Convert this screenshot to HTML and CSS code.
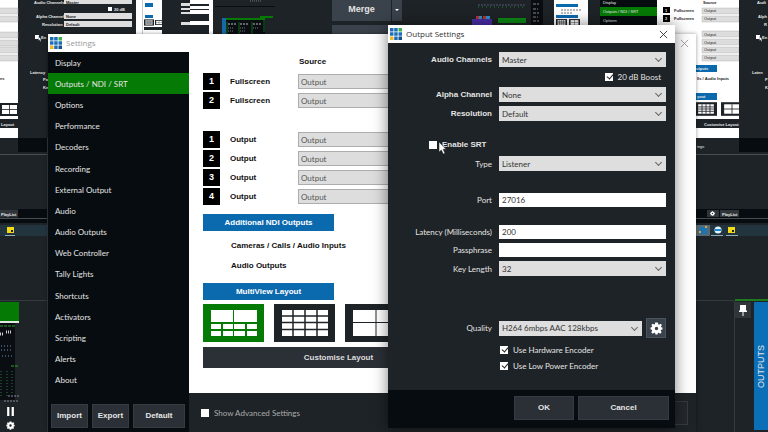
FILE: index.html
```html
<!DOCTYPE html>
<html lang="en">
<head>
    <meta charset="UTF-8">
    <meta name="viewport" content="width=device-width, initial-scale=1.0">
    <title>Output Settings</title>
    <link rel="stylesheet" href="styles.css">
</head>
<body>
    <!-- shared shapes -->
    <svg class="defs" aria-hidden="true">
        <symbol id="logo" viewBox="0 0 12 12">
            <path fill="#1c6fb5" d="M0 0h3.500v3.500H0zM4.200 0h3.500v3.500H4.200zM0 4.200h3.500v3.500H0zM4.200 4.200h3.500v3.500H4.200zM4.200 8.500h3.500V12H4.200zM8.500 4.200H12v3.500H8.500z"/>
            <path fill="#3fae49" d="M8.500 0H12v3.500H8.500z"/>
            <path fill="#174f8c" d="M8.500 8.500H12V12H8.500z"/>
            <path fill="#e9b82c" d="M0 8.500h3.500V12H0z"/>
        </symbol>
        <symbol id="gear" viewBox="0 0 24 24">
            <path fill="#fff" fill-rule="evenodd" d="M9.500 1h5l.7 3.300 1.500.6L19.500 3 22 5.600l-1.800 2.800.6 1.400L23 10v4l-2.500.5-.7 1.600 1.700 2.700-2.700 2.700-2.700-1.700-1.600.7-.5 2.500h-4l-.7-2.500-1.600-.7L5 21.500 2.300 18.800 4 16.100l-.7-1.600L1 14v-4l2.500-.6.6-1.500L2.500 5.400 5 3l2.500 1.600L9 4zM12 8.800a3.200 3.200 0 1 0 0 6.400 3.200 3.200 0 0 0 0-6.400z"/>
        </symbol>
        <symbol id="close" viewBox="0 0 10 10">
            <path d="M1 1l8 8M9 1l-8 8" fill="none" stroke="currentColor"/>
        </symbol>
        <symbol id="cursor" viewBox="0 0 9 14">
            <path d="M1 1v10l2.300-2 2 4 1.700-.8-1.900-3.900H8z" fill="#fff" stroke="#222" stroke-width=".5"/>
        </symbol>
        <symbol id="minitiles" viewBox="0 0 21 13">
            <path fill="#1e2327" d="M0 0h21v13H0z"/>
            <path fill="#fff" d="M3 2h15v9H3z"/>
            <path stroke="#1e2327" stroke-width=".8" d="M3 4.500h15M3 6.500h15M3 8.700h15M6.700 2v9M10.500 2v9M14.300 2v9"/>
        </symbol>
        <symbol id="mini4" viewBox="0 0 21 13">
            <path fill="#1e2327" d="M0 0h21v13H0z"/>
            <path fill="#fff" d="M3 2h15v9H3z"/>
            <path stroke="#1e2327" stroke-width=".8" d="M3 6.500h15M10.500 2v9"/>
        </symbol>
    </svg>

    <div class="desktop">
        <!-- preview and program monitors -->
        <svg class="monitors" viewBox="0 0 768 432" preserveAspectRatio="xMinYMin slice" aria-hidden="true">
            <!-- preview -->
            <path fill="#fff" d="M0 0h18v138H0z"/>
            <path fill="#ddd" stroke="#aaa" stroke-width=".4" d="M-1 8h19v6H-1zM-1 16h19v6H-1zM-1 32h19v6H-1zM-1 40h19v6H-1zM-1 47h19v6H-1zM-1 55h19v6H-1z"/>
            <text class="dark" x="0" y="80">es</text>
            <use href="#mini4" x="-1" y="103" width="21" height="13"/>
            <path fill="#1e2327" d="M0 119h18v9H0z"/>
            <text x="1" y="126">Layout</text>
            <path fill="#070c10" d="M18 138h30v14H18z"/>
            <path fill="#dedede" d="M64 0h68v4H64zM64 13h68v6H64zM64 21h68v6H64z"/>
            <path fill="#fff" d="M108 7h4v4h-4zM35 35h4v4h-4z"/>
            <text x="34" y="4">Audio Channels</text>
            <text x="114" y="11">20 dB</text>
            <text x="36" y="18">Alpha Channel</text>
            <text x="42" y="26">Resolution</text>
            <text class="dark" x="66" y="4">Master</text>
            <text class="dark" x="66" y="18">None</text>
            <text class="dark" x="66" y="26">Default</text>
            <text x="41" y="39">En</text>
            <use href="#cursor" x="38" y="36" width="4" height="6"/>
            <text x="30" y="74">Latency</text>
            <text x="43" y="81">Pa</text>
            <text x="43" y="89">Ke</text>
            <path fill="#fff" d="M136 0h26v34h-26zM190 0h23v34h-23z"/>
            <path fill="#ccc" d="M142 0h1v34h-1z"/>
            <path fill="#0b69ae" d="M145 3h8v4h-8zM145 15h8v3h-8z"/>
            <use href="#minitiles" x="144" y="19" width="10" height="7"/>
            <use href="#mini4" x="155" y="19" width="8" height="7"/>
            <path fill="#1e2327" d="M144 27h18v3h-18z"/>
            <path fill="#dedede" d="M181 3h9v3h-9zM181 8h9v2h-9zM181 12h9v2h-9zM181 22h9v3h-9z"/>
            <path fill="#1e2327" d="M190 4h19v2h-19zM190 9h19v1h-19zM190 14h19v7h-19zM190 25h19v9h-19z"/>
            <path fill="#0a0d12" d="M215 6h60v1h-60zM225 20h40v14h-40z"/>
            <path fill="#057a05" d="M224 18h41v2h-41zM260 16h13v2h-13z"/>
            <path fill="#1769a5" d="M222 18h4v16h-4z"/>
            <path stroke="#0b6b18" d="M227 22v12M239 22v12M252 22v12M264 20v12"/>
            <path stroke="#bbb" stroke-dasharray="2 1" d="M228 24h8M240 24h8M253 24h8"/>
            <path stroke="#777" stroke-dasharray="1 1" d="M228 28h6M240 28h6M253 28h6M228 31h6M240 31h6M250 1h12"/>

            <!-- program -->
            <path stroke="#557" stroke-dasharray="2 1" d="M478 5h48"/>
            <path stroke="#1a8a22" stroke-dasharray="1 3" d="M478 7h48"/>
            <path fill="#4b2ea8" d="M472 19h20v7h-20z"/>
            <path fill="#b33" d="M476 16h3v3h-3zM483 16h3v3h-3z"/>
            <path fill="#2f93c7" d="M479 16h3v3h-3zM486 16h4v3h-4z"/>
            <path fill="#0a8a14" d="M498 18h28v5h-28z"/>
            <path fill="#0a0d12" d="M531 0h12v25h-12z"/>
            <path stroke="#bbb" stroke-width=".7" stroke-dasharray="3 1" d="M533 4h6M533 9h5M533 13h6M533 17h5M533 21h6"/>
            <path fill="#fff" d="M554 0h34v25h-34z"/>
            <path fill="#0b69ae" d="M556 4h22v3h-22zM556 15h22v3h-22z"/>
            <path stroke="#777" stroke-dasharray="2 1" d="M561 10h20M561 13h12"/>
            <use href="#minitiles" x="556" y="19" width="11" height="7"/>
            <use href="#mini4" x="569" y="19" width="11" height="7"/>
            <path fill="#070c10" d="M600 0h57v25h-57z"/>
            <path fill="#057a05" d="M600 7h57v9h-57z"/>
            <text class="thin" x="603" y="4">Display</text>
            <text class="thin" x="603" y="13">Outputs / NDI / SRT</text>
            <text class="thin" x="603" y="22">Options</text>
            <path fill="#fff" d="M657 0h82v138h-82z"/>
            <path fill="#000" d="M663 7h7v6h-7zM663 15h7v7h-7z"/>
            <text x="665" y="12">1</text>
            <text x="665" y="20">2</text>
            <text class="dark" x="674" y="12">Fullscreen</text>
            <text class="dark" x="674" y="20">Fullscreen</text>
            <text class="dark" x="703" y="4">Source</text>
            <path fill="#ddd" stroke="#aaa" stroke-width=".4" d="M702 8h37v6h-37zM702 16h37v6h-37zM702 31h37v6h-37zM702 39h37v6h-37zM702 47h37v6h-37zM702 55h37v6h-37z"/>
            <text class="dark thin" x="704" y="12">Output</text>
            <text class="dark thin" x="704" y="20">Output</text>
            <text class="dark thin" x="704" y="36">Output</text>
            <text class="dark thin" x="704" y="44">Output</text>
            <text class="dark thin" x="704" y="51">Output</text>
            <text class="dark thin" x="704" y="59">Output</text>
            <path fill="#0b69ae" d="M663 65h54v7h-54zM663 93h54v7h-54z"/>
            <text x="696" y="70">utputs</text>
            <text class="dark" x="697" y="80">lls / Audio Inputs</text>
            <text x="697" y="98">yout</text>
            <use href="#minitiles" x="695" y="102" width="22" height="14"/>
            <use href="#mini4" x="721" y="102" width="22" height="14"/>
            <path fill="#1e2327" d="M663 119h76v9h-76zM739 0h29v138h-29z"/>
            <text x="704" y="126">Customise Layout</text>
            <text x="757" y="4">Audi</text>
            <text x="758" y="18">Alph</text>
            <text x="764" y="26">R</text>
            <path fill="#fff" d="M756 35h4v4h-4z"/>
            <text x="762" y="39">En</text>
            <use href="#cursor" x="759" y="36" width="4" height="6"/>
            <text x="752" y="74">Laten</text>
            <text x="765" y="81">P</text>
            <text x="765" y="89">K</text>
            <path fill="#070c10" d="M739 138h29v14h-29z"/>
            <text class="thin" x="697" y="148">ings</text>

            <!-- playlist strip and taskbar under both monitors -->
            <path fill="#070c10" d="M18 209h30v9H18zM18 219h30v4H18zM696 209h72v14h-72zM0 219h20v4H0z"/>
            <path fill="#30353a" d="M0 210h18v7H0zM720 210h19v7h-19zM707 210h12v7h-12z"/>
            <path stroke="#484d51" d="M0 154.500h48M696 154.500h72M0 218.500h48M696 218.500h72"/>
            <text x="1" y="216">PlayList</text>
            <text x="722" y="216">PlayList</text>
            <use href="#gear" x="710" y="211" width="5" height="5"/>
            <path fill="#22353f" d="M0 225h48v11H0zM696 225h72v11h-72z"/>
            <path fill="#f3d916" d="M7 227h7v6H7zM728 227h7v6h-7z"/>
            <path fill="#222" d="M11 230h2v2h-2zM732 230h2v2h-2z"/>
            <path fill="#566a75" d="M696 225h14v11h-14z"/>
            <path fill="#1b73b1" d="M700 227h7v7h-7z"/>
            <path fill="#e0a23c" d="M699 231h2v2h-2zM705 226h2v2h-2z"/>
            <circle cx="718" cy="230" r="3.500" fill="#dff1ff"/>
            <path fill="#168bd8" d="M715 229h6v2h-6z"/>
            <path stroke="#91a9b5" d="M5 235.500h10M711 235.500h12M726 235.500h12"/>

            <!-- input thumbnails -->
            <path stroke="#353a3f" d="M0 300.500h47M696 300.500h38M734.500 301v131M47.500 138v294"/>
            <path stroke="#1d7a1d" stroke-width="2" d="M735 300h33"/>
            <path fill="#057a05" d="M0 302h19v19H0z"/>
            <path fill="#dfe9df" d="M0 321h19v2H0z"/>
            <path fill="#0a0d12" d="M0 323h15v77H0z"/>
            <path stroke="#2aa52a" stroke-dasharray="3 1" d="M0 326h15M11 366h8"/>
            <path stroke="#ccc" stroke-width="3" stroke-dasharray="1 1" d="M0 334h3M6 332h6"/>
            <path stroke="#3b5068" stroke-width="2" stroke-dasharray="1 2" d="M1 346h12M1 350h12M2 356h12"/>
            <path stroke="#2a7a35" stroke-dasharray="1 2" d="M7 371v26M12 371v24M1 371v26"/>
            <path stroke="#889" stroke-dasharray="2 1" d="M4 401h15M8 396h11"/>
        </svg>

        <div class="mixer">
            <div class="transitions">
                <button type="button" class="merge">Merge</button>
                <button type="button" class="drop" aria-label="Choose transition"></button>
                <button type="button" class="next" aria-label="Next transition"></button>
            </div>
            <div class="input-bar">
                <div class="input-tools">
                    <button type="button" aria-label="Pause">
                        <svg viewBox="0 0 8 8"><path fill="#fff" d="M1 0h2v8H1zM5 0h2v8H5z"/></svg>
                    </button>
                    <button type="button" aria-label="Input settings"><svg><use href="#gear"/></svg></button>
                </div>
                <div class="output-tools">
                    <button type="button" class="pin" aria-label="Pin">
                        <svg viewBox="0 0 8 11"><path fill="#fff" d="M1 0h6v5l1 1v1H4.500v4h-1V7H0V6l1-1z"/></svg>
                    </button>
                    <button type="button" class="outputs">OUTPUTS</button>
                </div>
            </div>
        </div>

        <section class="window settings">
            <header class="titlebar inactive">
                <svg class="logo"><use href="#logo"/></svg>
                <h2>Settings</h2>
                <button type="button" class="close" aria-label="Close settings"><svg><use href="#close"/></svg></button>
            </header>
            <div class="settings-main">
                <div class="sidebar">
                    <nav>
                        <a href="#">Display</a>
                        <a href="#" class="active">Outputs / NDI / SRT</a>
                        <a href="#">Options</a>
                        <a href="#">Performance</a>
                        <a href="#">Decoders</a>
                        <a href="#">Recording</a>
                        <a href="#">External Output</a>
                        <a href="#">Audio</a>
                        <a href="#">Audio Outputs</a>
                        <a href="#">Web Controller</a>
                        <a href="#">Tally Lights</a>
                        <a href="#">Shortcuts</a>
                        <a href="#">Activators</a>
                        <a href="#">Scripting</a>
                        <a href="#">Alerts</a>
                        <a href="#">About</a>
                    </nav>
                    <div class="sidebar-buttons">
                        <button type="button" class="btn">Import</button>
                        <button type="button" class="btn">Export</button>
                        <button type="button" class="btn wide">Default</button>
                    </div>
                </div>
                <div class="content">
                    <div class="page">
                        <h3>Source</h3>
                        <div class="sources">
                            <div class="source"><b>1</b><label for="full1">Fullscreen</label><select id="full1"><option>Output</option></select></div>
                            <div class="source"><b>2</b><label for="full2">Fullscreen</label><select id="full2"><option>Output</option></select></div>
                        </div>
                        <div class="sources">
                            <div class="source"><b>1</b><label for="out1">Output</label><select id="out1"><option>Output</option></select></div>
                            <div class="source"><b>2</b><label for="out2">Output</label><select id="out2"><option>Output</option></select></div>
                            <div class="source"><b>3</b><label for="out3">Output</label><select id="out3"><option>Output</option></select></div>
                            <div class="source"><b>4</b><label for="out4">Output</label><select id="out4"><option>Output</option></select></div>
                        </div>
                        <button type="button" class="blue">Additional NDI Outputs</button>
                        <ul>
                            <li>Cameras / Calls / Audio Inputs</li>
                            <li>Audio Outputs</li>
                        </ul>
                        <button type="button" class="blue">MultiView Layout</button>
                        <div class="layouts">
                            <button type="button" class="selected" aria-label="Two large, eight small">
                                <svg viewBox="0 0 46 26"><path fill="#fff" d="M0 0h22v12H0zM23 0h23v12H23zM0 14h10v5H0zM12 14h10v5H12zM23 14h11v5H23zM36 14h10v5H36zM0 21h10v5H0zM12 21h10v5H12zM23 21h11v5H23zM36 21h10v5H36z"/></svg>
                            </button>
                            <button type="button" aria-label="Sixteen">
                                <svg viewBox="0 0 46 26"><path fill="#fff" d="M0 0h46v26H0z"/><path stroke="#1e2327" stroke-width="1.500" d="M0 6h46M0 12.500h46M0 19.500h46M11 0v26M23 0v26M35 0v26"/></svg>
                            </button>
                            <button type="button" aria-label="Four">
                                <svg viewBox="0 0 46 26"><path fill="#fff" d="M0 0h46v26H0z"/><path stroke="#1e2327" d="M0 12.500h46M23 0v26"/></svg>
                            </button>
                        </div>
                        <button type="button" class="customise">Customise Layout</button>
                    </div>
                    <footer class="settings-footer">
                        <label><input type="checkbox"> Show Advanced Settings</label>
                        <button type="button" class="btn" aria-label="Save settings"></button>
                    </footer>
                </div>
            </div>
        </section>

        <section class="window dialog" role="dialog" aria-label="Output Settings">
            <header class="titlebar">
                <svg class="logo"><use href="#logo"/></svg>
                <h2>Output Settings</h2>
                <button type="button" class="close" aria-label="Close"><svg><use href="#close"/></svg></button>
            </header>
            <form class="output-form">
                <div class="group audio">
                    <div class="field strong">
                        <label for="audio">Audio Channels</label>
                        <span class="select"><select id="audio"><option>Master</option></select></span>
                    </div>
                    <label class="check boost"><input type="checkbox" checked> 20 dB Boost</label>
                </div>
                <div class="group">
                    <div class="field strong">
                        <label for="alpha">Alpha Channel</label>
                        <span class="select"><select id="alpha"><option>None</option></select></span>
                    </div>
                    <div class="field strong">
                        <label for="resolution">Resolution</label>
                        <span class="select"><select id="resolution"><option>Default</option></select></span>
                    </div>
                </div>
                <div class="group srt">
                    <label class="check enable"><input type="checkbox"> Enable SRT
                        <svg class="pointer"><use href="#cursor"/></svg>
                    </label>
                    <div class="field">
                        <label for="type">Type</label>
                        <span class="select"><select id="type"><option>Listener</option></select></span>
                    </div>
                </div>
                <div class="group">
                    <div class="field">
                        <label for="port">Port</label>
                        <input type="text" id="port" value="27016">
                    </div>
                </div>
                <div class="group">
                    <div class="field">
                        <label for="latency">Latency (Milliseconds)</label>
                        <input type="text" id="latency" value="200">
                    </div>
                    <div class="field">
                        <label for="passphrase">Passphrase</label>
                        <input type="text" id="passphrase">
                    </div>
                    <div class="field">
                        <label for="key">Key Length</label>
                        <span class="select"><select id="key"><option>32</option></select></span>
                    </div>
                </div>
                <div class="group encoder">
                    <div class="field">
                        <label for="quality">Quality</label>
                        <div class="quality">
                            <span class="select"><select id="quality"><option>H264 6mbps AAC 128kbps</option></select></span>
                            <button type="button" class="gear" aria-label="Quality settings"><svg><use href="#gear"/></svg></button>
                        </div>
                    </div>
                    <div class="checks">
                        <label class="check"><input type="checkbox" checked> Use Hardware Encoder</label>
                        <label class="check"><input type="checkbox" checked> Use Low Power Encoder</label>
                    </div>
                </div>
            </form>
            <footer class="dialog-footer">
                <button type="button" class="btn ok">OK</button>
                <button type="button" class="btn cancel">Cancel</button>
            </footer>
        </section>
    </div>
</body>
</html>
```

FILE: styles.css
```css
* {
    padding: 0;
    margin: 0;
    box-sizing: border-box;
}

body {
    background: #1e2327;
    color: #e4e4e4;
    font: 8px/12px Lato, "Liberation Sans", sans-serif;
}

button,
input,
select {
    font: inherit;
    color: inherit;
    border: 0;
    border-radius: 0;
}

button {
    display: flex;
    align-items: center;
    justify-content: center;
}

h2,
h3 {
    font-size: 8px;
    font-weight: 400;
}

.defs {
    position: absolute;
    width: 0;
    height: 0;
}

.desktop {
    position: relative;
    height: 100vh;
    overflow: hidden;
}

.monitors {
    position: absolute;
    width: 100%;
    height: 100%;
}

.monitors text {
    font: bold 4px "Liberation Sans", sans-serif;
    fill: #e8e8e8;
}

.monitors .dark {
    fill: #222;
}

.monitors .thin {
    font-weight: 400;
}

/* mixer behind the windows */
.mixer {
    position: relative;
    height: 100%;
    display: flex;
    flex-direction: column;
    justify-content: space-between;
}

.transitions {
    display: grid;
    grid-template-columns: 59px 10px;
    grid-template-rows: 21px 12px;
    gap: 4px 1px;
    margin-left: 332px;
}

.transitions button {
    background: #3a424b;
}

.transitions .merge {
    font: bold 9px/12px "Liberation Sans", sans-serif;
    padding-bottom: 3px;
}

.drop::after {
    content: "";
    border: 2px solid transparent;
    border-top-color: #fff;
}

.transitions .next {
    grid-column: span 2;
}

.input-bar {
    height: 130px;
    display: flex;
    justify-content: space-between;
}

.input-tools {
    display: flex;
    flex-direction: column;
    justify-content: flex-end;
}

.input-tools button {
    width: 20px;
    height: 14px;
    background: #1e2327;
}

.input-tools svg {
    width: 9px;
    height: 9px;
}

.output-tools {
    display: flex;
    gap: 3px;
}

.pin {
    width: 16px;
    height: 16px;
    background: #30353a;
}

.pin svg {
    width: 8px;
    height: 11px;
}

.outputs {
    width: 14px;
    height: 128px;
    background: #0b6fb8;
    font: 9px/14px "Liberation Sans", sans-serif;
    writing-mode: vertical-rl;
    transform: rotate(180deg);
}

/* windows */
.window {
    position: absolute;
    display: flex;
    flex-direction: column;
}

.settings {
    top: 34px;
    left: 48px;
    right: 72px;
    bottom: 0;
    background: #fff;
    box-shadow: 0 0 4px rgba(0, 0, 0, .4);
}

.dialog {
    top: 25px;
    right: 93px;
    bottom: 4px;
    width: 287px;
    background: #1e2327;
    box-shadow: 0 0 14px rgba(0, 0, 0, .5);
}

.titlebar {
    height: 18px;
    flex: none;
    display: flex;
    align-items: center;
    gap: 4px;
    padding: 0 7px 0 2px;
    background: #fff;
    color: #333;
    font-family: "Open Sans", sans-serif;
}

.titlebar.inactive {
    color: #999;
}

.logo {
    width: 12px;
    height: 12px;
}

.close {
    margin-left: auto;
    background: none;
}

.close svg {
    width: 9px;
    height: 9px;
}

.btn {
    height: 24px;
    background: #2b3037;
    border: 1px solid #363b41;
    font: bold 8px/12px "Liberation Sans", sans-serif;
}

.settings-main {
    flex: 1;
    display: flex;
}

.sidebar {
    width: 141px;
    display: flex;
    flex-direction: column;
    background: #070c10;
}

nav {
    flex: 1;
    display: grid;
    grid-auto-rows: 1fr;
}

nav a {
    display: flex;
    align-items: center;
    padding-left: 7px;
    color: inherit;
    text-decoration: none;
}

nav .active {
    background: #057a05;
}

.sidebar-buttons {
    display: flex;
    gap: 4px;
    padding: 13px 4px 4px 3px;
}

.sidebar-buttons .btn {
    flex: 37;
}

.sidebar-buttons .wide {
    flex: 53;
}

.content {
    flex: 1;
    display: flex;
    flex-direction: column;
}

.page {
    flex: 1;
    padding: 4px 14px;
    color: #111;
    font: bold 8px/12px "Liberation Sans", sans-serif;
}

.page h3 {
    margin: 0 0 5px 96px;
    font-weight: bold;
}

.sources {
    display: grid;
    gap: 2px;
    margin-bottom: 22px;
}

.sources + .sources {
    margin-bottom: 9px;
}

.source {
    display: grid;
    grid-template-columns: 17px 58px 150px;
    column-gap: 10px;
    align-items: center;
}

.source b {
    height: 17px;
    background: #000;
    color: #fff;
    font: bold 9px/17px "Liberation Sans", sans-serif;
    text-align: center;
}

.source select {
    height: 15px;
    padding-left: 2px;
    appearance: none;
    background: #ddd;
    border: 1px solid #adadad;
    color: #555;
    font: 8px/12px Lato, "Liberation Sans", sans-serif;
}

.blue {
    width: 131px;
    height: 17px;
    background: #0b69ae;
    color: #fff;
}

.page ul {
    margin: 5px 0 7px 28px;
    list-style: none;
}

.page li {
    line-height: 20px;
}

.layouts {
    display: flex;
    gap: 10px;
    margin: 4px 0 5px;
}

.layouts button {
    width: 61px;
    height: 38px;
    background: #1e2327;
}

.layouts .selected {
    background: #057a05;
}

.layouts svg {
    width: 46px;
    height: 26px;
}

.customise {
    width: 271px;
    height: 21px;
    background: #2b3037;
    color: #ddd;
}

.settings-footer {
    height: 39px;
    display: flex;
    align-items: center;
    justify-content: space-between;
    padding: 0 8px 0 12px;
    background: #1e2327;
    color: #aaa;
}

.settings-footer label {
    display: flex;
    align-items: center;
    gap: 5px;
}

.settings-footer .btn {
    width: 60px;
    background: #23282c;
}

input[type="checkbox"] {
    flex: none;
    width: 8px;
    height: 8px;
    appearance: none;
    background: #fff;
}

input[type="checkbox"]:checked::after {
    content: "";
    display: block;
    width: 3px;
    height: 5px;
    margin: 0 0 0 3px;
    border: solid #222;
    border-width: 0 1px 1px 0;
    transform: rotate(40deg);
}

/* output settings form */
.output-form {
    flex: 1;
    padding: 9px 9px 0 0;
}

.group {
    display: grid;
    gap: 4px;
    margin-bottom: 18px;
}

.field {
    display: grid;
    grid-template-columns: 104px 1fr;
    column-gap: 7px;
    align-items: center;
}

.field > label {
    text-align: right;
}

.strong > label,
.enable {
    font: bold 8px/12px "Liberation Sans", sans-serif;
}

.select {
    position: relative;
    display: flex;
}

.select select {
    width: 100%;
    height: 15px;
    padding-left: 3px;
    appearance: none;
    background: #dedede;
    color: #333;
}

.select::after {
    content: "";
    position: absolute;
    top: 4px;
    right: 5px;
    width: 4px;
    height: 4px;
    border: solid #666;
    border-width: 0 1px 1px 0;
    transform: rotate(45deg);
}

input[type="text"] {
    width: 100%;
    height: 14px;
    padding-left: 3px;
    background: #fff;
    color: #333;
}

.check {
    display: flex;
    align-items: center;
    gap: 5px;
    padding-left: 112px;
}

.audio {
    margin-bottom: 4px;
}

.boost {
    justify-self: end;
    padding: 0 5px 0 0;
}

.srt {
    gap: 5px;
    margin-bottom: 22px;
}

.enable {
    position: relative;
    padding-left: 41px;
}

.pointer {
    position: absolute;
    top: 2px;
    left: 50px;
    width: 9px;
    height: 14px;
}

.encoder {
    margin-top: 42px;
}

.checks {
    display: grid;
    gap: 4px;
    padding-top: 2px;
}

.quality {
    display: grid;
    grid-template-columns: 1fr 20px;
    gap: 4px;
    align-items: center;
}

.gear {
    height: 20px;
    background: #3a424b;
    border: 1px solid #4b535c;
}

.gear svg {
    width: 13px;
    height: 13px;
}

.dialog-footer {
    height: 38px;
    display: flex;
    gap: 4px;
    justify-content: flex-end;
    padding: 6px;
    background: #070c10;
}

.ok {
    width: 60px;
}

.cancel {
    width: 91px;
}
```
